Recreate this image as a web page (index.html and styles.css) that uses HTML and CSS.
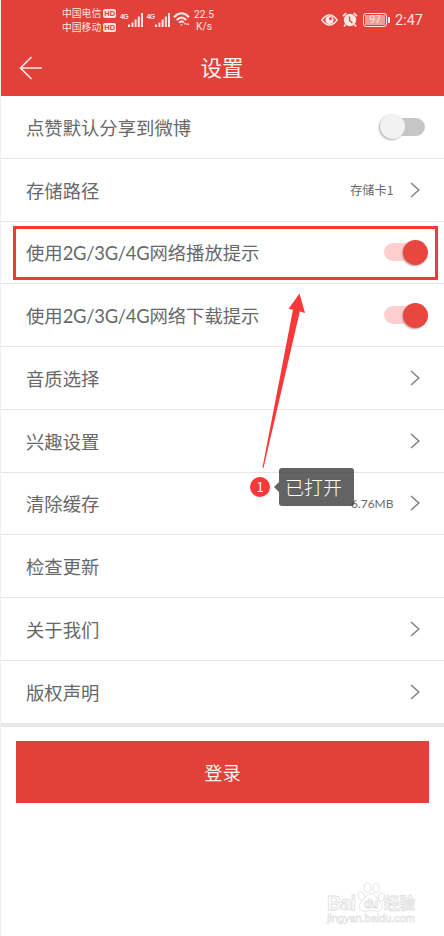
FILE: index.html
```html
<!DOCTYPE html>
<html lang="zh-CN">
<head>
<meta charset="utf-8">
<title>设置</title>
<link rel="stylesheet" href="styles.css">
</head>
<body>
<div class="screen">
  <header class="header">
    <div class="status">
      <div class="carriers">
        <div class="carrier"><span>中国电信</span><b class="hd">HD</b></div>
        <div class="carrier"><span>中国移动</span><b class="hd">HD</b></div>
      </div>
      <div class="signal"><b>4G</b><svg width="16" height="15" viewBox="0 0 16 15"><path d="M0 11.5h2V14H0zM3.4 9.5h2V14h-2zM6.6 6.5h2V14h-2zM9.8 3.5h2V14h-2zM13 0h2v14h-2z" fill="#ffe6e3"/></svg></div>
      <div class="signal"><b>4G</b><svg width="16" height="15" viewBox="0 0 16 15"><path d="M0 11.5h2V14H0zM3.4 9.5h2V14h-2zM6.6 6.5h2V14h-2zM9.8 3.5h2V14h-2zM13 0h2v14h-2z" fill="#ffe6e3"/></svg></div>
      <svg class="wifi" width="18" height="16" viewBox="0 0 18 16" fill="none" stroke="#ffe6e3" stroke-width="2"><path d="M1 5.2Q8.500-2.500 16 5.200M3.700 8Q8.500 3.300 13.300 8M6 10.600Q8.500 8.200 11 10.600"/><path d="M7.200 12.500h2.600L8.500 14z" fill="#ffe6e3" stroke="none"/><path d="M11.500 12h4.500M11.500 12l1-1M16 12l-1 1" stroke-width="1"/></svg>
      <div class="speed"><span>22.5</span><span>K/s</span></div>
      <div class="status-right">
        <svg class="eye" width="17" height="12" viewBox="0 0 17 12"><path d="M.8 6Q8.500-4 16.200 6Q8.500 16 .8 6z" fill="none" stroke="#ffe6e3" stroke-width="1.500"/><circle cx="8.500" cy="6" r="4" fill="#ffe6e3"/><circle cx="9.500" cy="4.700" r="1.400" fill="#e24039"/></svg>
        <svg class="alarm" width="16" height="16" viewBox="0 0 16 16"><circle cx="8" cy="8" r="6.200" fill="#ffe6e3"/><path d="M1 4.200L4.200 1M15 4.200L11.800 1M3.500 12.500L2 14.500M12.500 12.500L14 14.500" stroke="#ffe6e3" stroke-width="1.700"/><path d="M7.500 4.500V8.500L10.500 11" fill="none" stroke="#e24039" stroke-width="1.300"/></svg>
        <div class="battery"><span>97</span></div><i class="battery-tip"></i>
        <span class="time">2:47</span>
      </div>
    </div>
    <div class="titlebar">
      <svg class="back" width="24" height="24" viewBox="0 0 24 24" fill="none" stroke="#ffe9e6" stroke-width="1.700"><path d="M12.500 1L1.500 12L12.500 23M1.500 12H23"/></svg>
      <h1>设置</h1>
    </div>
  </header>

  <main>
    <ul class="list">
      <li class="row"><span>点赞默认分享到微博</span><i class="toggle off"></i></li>
      <li class="row"><span>存储路径</span><em>存储卡1</em><svg class="chev" viewBox="0 0 10 16"><path d="M1 1l7.800 7L1 15"/></svg></li>
      <li class="row marked"><span>使用<span class="latin">2G/3G/4G</span>网络播放提示</span><i class="toggle on"></i></li>
      <li class="row"><span>使用<span class="latin">2G/3G/4G</span>网络下载提示</span><i class="toggle on"></i></li>
      <li class="row"><span>音质选择</span><svg class="chev" viewBox="0 0 10 16"><path d="M1 1l7.800 7L1 15"/></svg></li>
      <li class="row"><span>兴趣设置</span><svg class="chev" viewBox="0 0 10 16"><path d="M1 1l7.800 7L1 15"/></svg></li>
      <li class="row"><span>清除缓存</span><em class="size">6.76MB</em><svg class="chev" viewBox="0 0 10 16"><path d="M1 1l7.800 7L1 15"/></svg></li>
      <li class="row"><span>检查更新</span></li>
      <li class="row"><span>关于我们</span><svg class="chev" viewBox="0 0 10 16"><path d="M1 1l7.800 7L1 15"/></svg></li>
      <li class="row"><span>版权声明</span><svg class="chev" viewBox="0 0 10 16"><path d="M1 1l7.800 7L1 15"/></svg></li>
    </ul>
    <button class="login">登录</button>
  </main>

  <svg class="arrow" width="44" height="178" viewBox="0 0 44 178"><path d="M39.500 1.500L45 21L39.800 19.500L3.500 176L2.500 175.500L33 17.500L28.500 17z" fill="#fb3838"/></svg>
  <div class="step">1</div>
  <div class="tip">已打开</div>

  <svg class="watermark" width="100" height="50" viewBox="0 0 100 50" fill="#fff" stroke="#dedede" stroke-width=".8">
    <text class="brand" x="1" y="33" textLength="29">Bai</text>
    <ellipse cx="35.500" cy="19" rx="3.200" ry="4.300" transform="rotate(-15 35.500 19)"/>
    <ellipse cx="41.500" cy="10.500" rx="3.200" ry="4.700"/>
    <ellipse cx="50" cy="11" rx="3.200" ry="4.500"/>
    <ellipse cx="55.500" cy="20" rx="3" ry="4.200" transform="rotate(15 55.500 20)"/>
    <path d="M45 16.500C40 17 39 22 35 25C31 31 34 35 40 34Q45 33 49 34C56 35 59 30 54 25C50 22 50 16.500 45 16.500z"/>
    <text class="du" x="38" y="31" textLength="14">du</text>
    <text class="cn" x="58" y="32" textLength="31">经验</text>
    <text class="url" x="1" y="45" textLength="88">jingyan.baidu.com</text>
  </svg>
</div>
</body>
</html>
```

FILE: styles.css
```css
* { box-sizing: border-box; }
body {
  margin: 0;
  background: #fff;
  font-family: "Noto Sans CJK SC", sans-serif;
  color: #686868;
}
.screen {
  position: relative;
  width: 444px;
  height: 936px;
  overflow: hidden;
  border-left: 1px solid #efefef;
}
.header {
  height: 96px;
  background: #e24039;
  border-bottom: 1px solid #d94038;
  color: #ffe6e3;
}
.status {
  display: flex;
  align-items: center;
  height: 40px;
  padding-left: 61px;
}
.carriers { width: 58px; }
.carrier {
  display: flex;
  align-items: center;
  gap: 2px;
  height: 14px;
  font-size: 9.8px;
  line-height: 14px;
  white-space: nowrap;
}
.hd {
  width: 13px;
  height: 9px;
  border-radius: 2px;
  background: #ffe6e3;
  color: #e24039;
  font: bold 7.5px/9px "Liberation Sans", sans-serif;
  text-align: center;
}
.signal { display: flex; width: 26.5px; height: 15px; }
.signal b { width: 8px; font: bold 7px/7px "Liberation Sans", sans-serif; letter-spacing: -.6px; }
.signal svg { flex: none; }
.wifi { margin-right: 3px; }
.speed {
  display: flex;
  flex-direction: column;
  align-items: center;
  width: 20px;
  padding-top: 1px;
  font: 10.2px/12px Roboto, sans-serif;
}
.status-right { display: flex; align-items: center; margin-left: auto; padding-right: 21px; }
.alarm { margin: 0 5px 0 4px; }
.battery {
  width: 24px;
  height: 14px;
  padding: 1px;
  border: 1.500px solid #ffe6e3;
  border-radius: 3px;
}
.battery span {
  display: block;
  height: 10px;
  background: #f09c98;
  font: 10.5px/10px Roboto, sans-serif;
  text-align: center;
}
.battery-tip { width: 2px; height: 6px; margin: 0 5px 0 1px; background: #ffe6e3; }
.time { padding-top: 2px; font: 14.5px/20px Roboto, sans-serif; }
.titlebar { display: flex; align-items: center; height: 55px; padding-left: 18px; }
.titlebar h1 { margin: -1px 0 0 157.5px; font-size: 21.5px; line-height: 30px; font-weight: 400; color: #fff1ef; }

.list { margin: 0; padding: 0; list-style: none; border-bottom: 3px solid #e8e8e8; }
.row {
  display: flex;
  align-items: center;
  height: 62.75px;
  padding: 0 24px 0 25px;
  border-bottom: 1px solid #e6e6e6;
  font-size: 18.35px;
  line-height: 28px;
}
.latin { font-family: Lato, sans-serif; letter-spacing: -.25px; }
.row > :nth-child(2) { margin-left: auto; }
.row em { margin-right: 16.5px; font-size: 12.2px; font-style: normal; }
.row .size { padding-top: 2px; font-family: Lato, sans-serif; font-size: 12px; }
.chev { width: 10px; height: 16px; fill: none; stroke: #858585; stroke-width: 1.600; }
.toggle { display: flex; align-items: center; height: 18px; border-radius: 9px; }
.toggle::before { content: ""; width: 25px; height: 25px; border-radius: 50%; }
.off { width: 45px; margin-right: -5px; background: linear-gradient(90deg, transparent 14px, #c6c6c6 14px); }
.off::before { background: #f2f2f2; box-shadow: -1px 1px 2px #aaa; }
.on { width: 44px; margin-right: -8px; justify-content: flex-end; background: linear-gradient(90deg, #ffcfcf 34px, transparent 34px); }
.on::before { background: #e94640; box-shadow: -1px 1px 2px #b99; }
.marked { position: relative; }
.marked::after {
  content: "";
  position: absolute;
  box-sizing: border-box;
  left: 12px;
  top: 4px;
  width: 425px;
  height: 54px;
  border: 3px solid #fb3838;
}
.login {
  display: block;
  width: 413px;
  height: 62px;
  margin: 14.5px 0 0 15px;
  padding: 0;
  border: 0;
  background: #e24039;
  color: #fff1ef;
  font: 18.3px/62px "Noto Sans CJK SC", sans-serif;
}
.arrow { position: absolute; left: 259px; top: 292px; overflow: visible; }
.step {
  position: absolute;
  left: 249px;
  top: 477px;
  width: 20px;
  height: 20px;
  border-radius: 50%;
  background: #fb3838;
  color: #fff;
  font-size: 13px;
  line-height: 20px;
  text-align: center;
}
.tip {
  position: absolute;
  left: 278px;
  top: 468px;
  width: 75px;
  height: 38px;
  border-radius: 3px;
  background: rgba(60, 60, 60, .8);
  color: #fff;
  font-size: 19px;
  font-weight: 300;
  line-height: 37px;
  padding-left: 6px;
}
.tip::before {
  content: "";
  position: absolute;
  left: -5px;
  top: 14px;
  border: 5px solid transparent;
  border-left: 0;
  border-right-color: rgba(60, 60, 60, .8);
}
.watermark { position: absolute; left: 325px; top: 877px; overflow: visible; }
.brand { font: bold 20px "Liberation Sans", sans-serif; }
.du { font: bold 12px "Liberation Sans", sans-serif; }
.cn { font: bold 15.500px "Noto Sans CJK SC", sans-serif; }
.url { font: 11px "Liberation Sans", sans-serif; stroke-width: .6; }
```
